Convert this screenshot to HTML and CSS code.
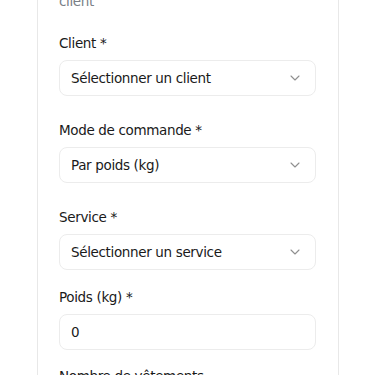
FILE: index.html
```html
<!DOCTYPE html>
<html>
  <head>
    <title>Nouvelle commande</title>
    <link rel="stylesheet" href="styles.css">
  </head>
  <body>
    <div class="card">
      <p class="description">Remplissez les informations pour créer une<br>client</p>

      <div class="field field-select">
        <label class="label">Client *</label>
        <div class="select">
          <span>Sélectionner un client</span>
          <svg class="chevron" width="16" height="16" viewBox="0 0 24 24"><path d="m6 9 6 6 6-6"/></svg>
        </div>
      </div>

      <div class="field field-select">
        <label class="label">Mode de commande *</label>
        <div class="select">
          <span>Par poids (kg)</span>
          <svg class="chevron" width="16" height="16" viewBox="0 0 24 24"><path d="m6 9 6 6 6-6"/></svg>
        </div>
      </div>

      <div class="field field-service">
        <label class="label">Service *</label>
        <div class="select">
          <span>Sélectionner un service</span>
          <svg class="chevron" width="16" height="16" viewBox="0 0 24 24"><path d="m6 9 6 6 6-6"/></svg>
        </div>
      </div>

      <div class="field">
        <label class="label">Poids (kg) *</label>
        <input class="input" type="number" value="0" />
      </div>

      <div class="field">
        <label class="label">Nombre de vêtements</label>
        <input class="input" type="number" value="0" />
      </div>
    </div>
  </body>
</html>
```

FILE: styles.css
```css
:root {
  --border: #e8e8e8;
  --input-border: #ececec;
  --text-primary: #1a1a1a;
  --text-secondary: #7a7f87;
  --chevron: #8f8f8f;
}

body {
  margin: 0;
  background: #ffffff;
  font-family: 'DejaVu Sans', Verdana, sans-serif;
  font-size: 13.5px;
  letter-spacing: -0.35px;
  color: var(--text-primary);
}

.card {
  width: 302px;
  box-sizing: border-box;
  margin: -29px 0 0 37px;
  padding: 0 22px 40px 21px;
  border: 1px solid var(--border);
  border-top: none;
  background: #ffffff;
}

.description {
  margin: 0 0 22px 0;
  line-height: 20px;
  color: var(--text-secondary);
  white-space: nowrap;
}

.field {
  display: flex;
  flex-direction: column;
  gap: 7px;
  margin-bottom: 16px;
}

.field-select {
  margin-bottom: 24px;
}

.field-service {
  margin-bottom: 17px;
}

.label {
  line-height: 20px;
  color: var(--text-primary);
}

.select,
.input {
  height: 36px;
  box-sizing: border-box;
  border: 1px solid var(--input-border);
  border-radius: 8px;
  background: #ffffff;
  font-family: inherit;
  font-size: 13.5px;
  letter-spacing: -0.35px;
  color: var(--text-primary);
}

.select {
  display: flex;
  align-items: center;
  justify-content: space-between;
  padding: 0 12px 0 11px;
}

.input {
  width: 100%;
  padding: 0 11px;
  outline: none;
  -moz-appearance: textfield;
}

.input::-webkit-inner-spin-button,
.input::-webkit-outer-spin-button {
  -webkit-appearance: none;
  margin: 0;
}

.chevron {
  fill: none;
  stroke: var(--chevron);
  stroke-width: 1.6;
  stroke-linecap: round;
  stroke-linejoin: round;
}
```
